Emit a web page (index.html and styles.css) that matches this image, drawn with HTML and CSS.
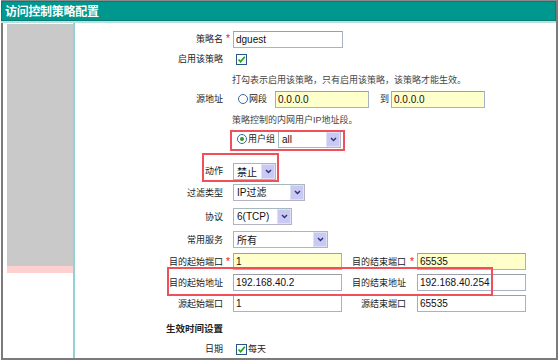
FILE: index.html
```html
<!DOCTYPE html>
<html lang="zh-CN">
<head>
  <meta charset="UTF-8" />
  <title>访问控制策略配置</title>
  <link rel="stylesheet" href="styles.css">
</head>
<body>
  <div class="panel">
    <div class="panel-title">访问控制策略配置</div>
    <div class="panel-rule"></div>
    <div class="panel-body">
      <div class="side">
        <div class="side-fill"></div>
        <div class="side-mark"></div>
      </div>

      <div class="content">
        <div class="form">
          <span class="label">策略名</span><span class="star">*</span>
          <div class="field"><input class="input input-name" type="text" value="dguest"></div>

          <span class="label">启用该策略</span>
          <div class="field">
            <span class="check"><svg width="9" height="9" viewBox="0 0 9 9"><path d="M1.5 4.5 L3.6 6.8 L7.8 1.8" fill="none" stroke="#1ea11e" stroke-width="1.7"/></svg></span>
          </div>

          <div class="field hint">打勾表示启用该策略，只有启用该策略，该策略才能生效。</div>

          <span class="label">源地址</span>
          <div class="field">
            <span class="radio"></span><span class="opt">网段</span>
            <input class="input input-ip yellow" type="text" value="0.0.0.0">
            <span class="to">到</span>
            <input class="input input-ip yellow tight" type="text" value="0.0.0.0">
          </div>

          <div class="field hint">策略控制的内网用户IP地址段。</div>

          <div class="field">
            <span class="radio on"></span><span class="opt">用户组</span>
            <span class="select select-group"><span class="select-text">all</span><span class="select-btn"><svg width="7" height="5" viewBox="0 0 7 5"><path d="M1 1 L3.5 3.6 L6 1" fill="none" stroke="#2b3470" stroke-width="1.4"/></svg></span></span>
          </div>

          <span class="label low">动作</span>
          <div class="field low">
            <span class="select select-action"><span class="select-text cjk">禁止</span><span class="select-btn"><svg width="7" height="5" viewBox="0 0 7 5"><path d="M1 1 L3.5 3.6 L6 1" fill="none" stroke="#2b3470" stroke-width="1.4"/></svg></span></span>
          </div>

          <span class="label">过滤类型</span>
          <div class="field">
            <span class="select select-filter"><span class="select-text">IP过滤</span><span class="select-btn"><svg width="7" height="5" viewBox="0 0 7 5"><path d="M1 1 L3.5 3.6 L6 1" fill="none" stroke="#2b3470" stroke-width="1.4"/></svg></span></span>
          </div>

          <span class="label">协议</span>
          <div class="field">
            <span class="select select-proto"><span class="select-text">6(TCP)</span><span class="select-btn"><svg width="7" height="5" viewBox="0 0 7 5"><path d="M1 1 L3.5 3.6 L6 1" fill="none" stroke="#2b3470" stroke-width="1.4"/></svg></span></span>
          </div>

          <span class="label">常用服务</span>
          <div class="field">
            <span class="select select-service"><span class="select-text cjk">所有</span><span class="select-btn"><svg width="7" height="5" viewBox="0 0 7 5"><path d="M1 1 L3.5 3.6 L6 1" fill="none" stroke="#2b3470" stroke-width="1.4"/></svg></span></span>
          </div>

          <span class="label">目的起始端口</span><span class="star">*</span>
          <div class="field half"><input class="input input-port yellow" type="text" value="1"></div>
          <span class="label second">目的结束端口</span><span class="star second">*</span>
          <div class="field end"><input class="input input-port yellow" type="text" value="65535"></div>

          <span class="label">目的起始地址</span>
          <div class="field half"><input class="input input-port" type="text" value="192.168.40.2"></div>
          <span class="label second">目的结束地址</span>
          <div class="field end"><input class="input input-port" type="text" value="192.168.40.254"></div>

          <span class="label">源起始端口</span>
          <div class="field half"><input class="input input-port" type="text" value="1"></div>
          <span class="label second">源结束端口</span>
          <div class="field end"><input class="input input-port" type="text" value="65535"></div>

          <span class="label section">生效时间设置</span>

          <span class="label">日期</span>
          <div class="field">
            <span class="check"><svg width="9" height="9" viewBox="0 0 9 9"><path d="M1.5 4.5 L3.6 6.8 L7.8 1.8" fill="none" stroke="#1ea11e" stroke-width="1.7"/></svg></span>
            <span class="opt">每天</span>
          </div>
        </div>

        <!-- rote Markierungen -->
        <div class="mark mark-group"></div>
        <div class="mark mark-action"></div>
        <div class="mark mark-addr"></div>
      </div>
    </div>
  </div>
</body>
</html>
```

FILE: styles.css
```css
body {
  margin: 0;
  background: #fff;
  font-family: "Liberation Sans", "Noto Sans CJK SC", sans-serif;
  font-size: 9px;
  color: #222;
}

.panel {
  width: 557px;
  height: 360px;
  margin-left: 1px;
  box-sizing: border-box;
  border-top: 1px solid #8a8a8a;
  border-right: 2px solid #7b7b7b;
  display: flex;
  flex-direction: column;
}

.panel-title {
  height: 20px;
  box-sizing: border-box;
  background: #00978f;
  border: 1px solid #0b7b76;
  color: #fff;
  font-family: "Noto Sans CJK SC", sans-serif;
  font-weight: 700;
  font-size: 12px;
  line-height: 17px;
  padding-left: 3px;
  letter-spacing: -0.3px;
}

.panel-rule {
  height: 2px;
  background: #b4e2df;
}

.panel-body {
  flex: 1;
  display: flex;
  border-left: 2px solid #7b7b7b;
  border-bottom: 2px solid #7b7b7b;
  min-height: 0;
}

/* linke Leiste */
.side {
  width: 66px;
  margin-left: 4px;
  padding-top: 1px;
  display: flex;
  flex-direction: column;
}

.side-fill {
  height: 242px;
  background: #c9c9c9;
}

.side-mark {
  height: 7px;
  background: #ffd0d0;
}

.content {
  flex: 1;
  position: relative;
  border-left: 2px solid #93d2d2;
  overflow: hidden;
}

/* Formular */
.form {
  display: grid;
  grid-template-columns: 148px 10px 112px 61px 10px 110px;
  grid-template-rows: repeat(6, 20px) 31px 25px 23px 23px 21px 21px 21px 25px 20px;
  align-items: center;
  padding-top: 6px;
}

.label {
  grid-column: 1;
  text-align: right;
  font-family: "Noto Sans CJK SC", sans-serif;
  line-height: 12px;
  white-space: nowrap;
}

.label.second {
  grid-column: 4;
}

.label.section {
  font-weight: 700;
  font-size: 9.5px;
  padding-top: 2px;
}

.star {
  grid-column: 2;
  color: #e8101a;
  font-size: 10px;
  padding-left: 3px;
  line-height: 10px;
}

.star.second {
  grid-column: 5;
  padding-left: 4px;
}

.field {
  grid-column: 3 / -1;
  display: flex;
  align-items: center;
}

.field.half {
  grid-column: 3;
}

.field.end {
  grid-column: 6;
  padding-left: 1px;
}

.low {
  align-self: end;
}

.label.low {
  padding-bottom: 3px;
}

.hint {
  margin-left: -1px;
  color: #444;
  font-family: "Liberation Sans", "Noto Sans CJK SC", sans-serif;
  white-space: nowrap;
}

.opt,
.to {
  font-family: "Noto Sans CJK SC", sans-serif;
  line-height: 12px;
}

.opt {
  margin-left: 1px;
}

.to {
  margin-left: 11px;
  margin-right: 2px;
}

/* Eingabefelder */
.input {
  height: 17px;
  box-sizing: border-box;
  margin: 0;
  padding: 0 2px;
  border: 1px solid #a9b1c4;
  border-top-color: #9aa0aa;
  border-left-color: #8fb5cc;
  background: #fff;
  font-family: "Liberation Sans", sans-serif;
  font-size: 10px;
  color: #111;
  outline: none;
}

.input.yellow {
  background: #ffffcc;
}

.input-name {
  width: 110px;
}

.input-ip {
  width: 94px;
  margin-left: 8px;
}

.input-ip.tight {
  margin-left: 0;
}

.input-port {
  width: 109px;
}

/* Checkbox und Radio */
.check {
  width: 11px;
  height: 11px;
  box-sizing: border-box;
  margin-left: 3px;
  border: 1px solid #2a5687;
  background: #fff;
  display: flex;
  align-items: center;
  justify-content: center;
}

.radio {
  width: 10px;
  height: 10px;
  box-sizing: border-box;
  margin-left: 5px;
  border: 1px solid #3b6a9b;
  border-radius: 50%;
  background: #fff;
  position: relative;
}

.radio.on {
  margin-left: 4px;
}

.radio.on::after {
  content: "";
  position: absolute;
  width: 4px;
  height: 4px;
  left: 2px;
  top: 2px;
  border-radius: 50%;
  background: #2a9a2a;
}

/* Auswahlfelder */
.select {
  display: inline-flex;
  height: 17px;
  box-sizing: border-box;
  border: 1px solid #a3b9bd;
  border-right-color: #b3b3c6;
  border-bottom-color: #b3b3c6;
  background: #fff;
}

.select-text {
  flex: 1;
  padding-left: 3px;
  font-size: 10px;
  line-height: 15px;
  color: #111;
  white-space: nowrap;
}

.select-text.cjk {
  font-family: "Noto Sans CJK SC", sans-serif;
  font-size: 10px;
}

.select-btn {
  width: 14px;
  background: #c9c9f3;
  border: 1px solid #e0e0f8;
  box-sizing: border-box;
  display: flex;
  align-items: center;
  justify-content: center;
}

.select-group {
  width: 63px;
  margin-left: 3px;
}

.select-action {
  width: 43px;
}

.select-filter {
  width: 72px;
}

.select-proto {
  width: 59px;
}

.select-service {
  width: 95px;
}

/* rote Markierungen */
.mark {
  position: absolute;
  border: 2px solid #f0505a;
  box-sizing: border-box;
}

.mark-group {
  left: 155px;
  top: 107px;
  width: 115px;
  height: 21px;
}

.mark-action {
  left: 127px;
  top: 130px;
  width: 77px;
  height: 29px;
}

.mark-addr {
  left: 92px;
  top: 244px;
  width: 326px;
  height: 29px;
}
```
